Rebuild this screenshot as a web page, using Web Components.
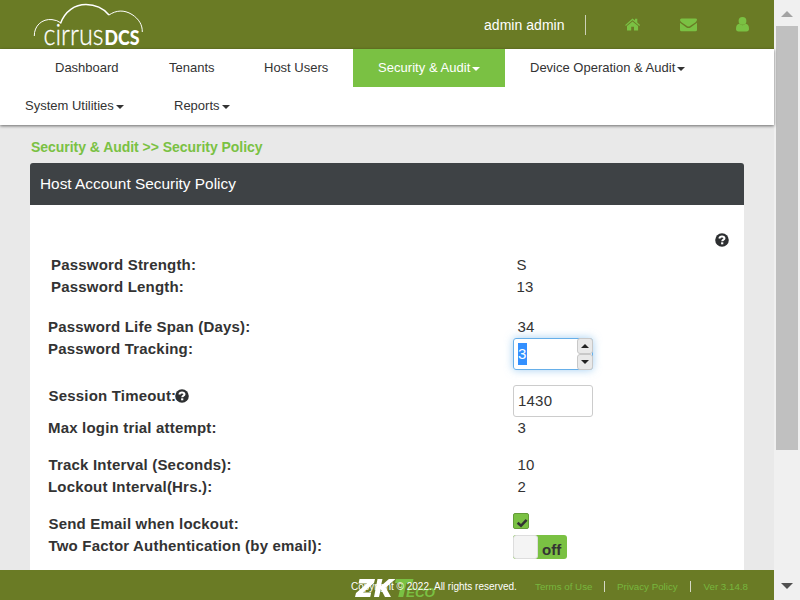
<!DOCTYPE html>
<html lang="en">
<head>
<meta charset="utf-8">
<title>Host Account Security Policy</title>
<style>
html,body{margin:0;height:100%;overflow:hidden;font-family:"Liberation Sans",Arial,sans-serif;color:#333}
</style>
</head>
<body>
<policy-page></policy-page>
<script>
function define(name, html){
  const t=document.createElement('template'); t.innerHTML=html;
  customElements.define(name, class extends HTMLElement{
    constructor(){super();this.attachShadow({mode:'open'}).appendChild(t.content.cloneNode(true));}
  });
}

define('cirrus-logo', `<style>:host{display:block;width:116px;height:49px}svg{display:block;overflow:visible}</style>
<svg width="116" height="49" viewBox="30 0 116 49" fill="none" stroke="#fff">
<path d="M34.3 36C34 26 42 18.5 52 19.6Q57 20 61 23" stroke-width="1"/>
<path d="M60.5 23.5C65 11 75 4.6 86 4.6C95 4.6 103 8 109 15" stroke-width="1.5"/>
<path d="M109 15C116 10.200 124 9.500 132 14.500C139 19 142.500 25 142.300 32" stroke-width="1"/>
<g fill="#fff" stroke="none"><text x="43.500" y="44.800" font-family="Lato" font-weight="300" font-size="28.500" textLength="60" lengthAdjust="spacingAndGlyphs" stroke="#fff" stroke-width=".3">cirrus</text>
<text x="104.500" y="44.800" font-family="Lato" font-weight="900" font-size="20" textLength="35" lengthAdjust="spacingAndGlyphs">DCS</text></g>
</svg>`);

define('top-bar', `<style>
:host{display:flex;height:49px;background:#6a7b25;align-items:flex-start}
cirrus-logo{margin-left:30px}
.user{margin-left:auto;color:#fff;font-size:14px;line-height:16px;letter-spacing:.04px;padding:17px 0 0;width:101px;white-space:nowrap}
.sep{width:1px;height:20px;background:#cdd1b8;margin-top:15px}
.icons{display:flex;width:188px;height:49px}
svg{fill:#7ac143;display:block}
</style><cirrus-logo></cirrus-logo><span class="user">admin admin</span><i class="sep"></i>
<div class="icons"><svg width="188" height="49" viewBox="586 0 188 49">
<path d="M625.200 24.900 632.500 18.500l2.500 2.100v-1.900h2.300v3.900l2.800 2.300-.8 1-6.800-5.700-6.700 5.700zM627 26l5.500-4.600 5.600 4.600v4.500h-4.100v-3.800h-2.800v3.800H627z"/>
<path d="M680 20q0-1.500 1.500-1.500h14q1.500 0 1.500 1.300 0 1.300-1.700 2.600l-5.300 3.700q-1.500 1-3 0l-5.200-3.700Q680 21.200 680 20zM680 22.800l6.500 4.600q2 1.400 4 0l6.500-4.600v7q0 1.500-1.500 1.500h-14q-1.500 0-1.500-1.500z"/>
<circle cx="742.500" cy="20.900" r="3.900"/><path d="M739.300 23.800Q742.500 26.500 745.700 23.800 749 24 749 29q0 2.400-2.600 2.400h-7.800Q736 31.400 736 29 736 24 739.300 23.800z"/>
</svg></div>`);

define('nav-item', `<style>
:host{display:flex;align-items:center;box-sizing:border-box;height:38px;padding:0 0 1px 25px;font-size:13px;line-height:18px;white-space:nowrap}
:host([active]){background:#7ac143;color:#fff}
i{display:none;border:4px solid transparent;border-top-color:currentColor;border-bottom:0;margin:3px 0 0 2px}
:host([menu]) i{display:block}
</style><slot></slot><i></i>`);

define('nav-bar', `<style>
:host{display:block;height:76px;background:#fff;box-shadow:0 1px 3px rgba(0,0,0,.55);position:relative}
div{display:flex}.one{padding-left:30px}
</style><div class="one"><nav-item style="width:114px">Dashboard</nav-item><nav-item style="width:95px">Tenants</nav-item><nav-item style="width:114px">Host Users</nav-item><nav-item active menu style="width:152px;letter-spacing:.04px">Security &amp; Audit</nav-item><nav-item menu style="width:205px">Device Operation &amp; Audit</nav-item></div>
<div><nav-item menu style="width:149px">System Utilities</nav-item><nav-item menu>Reports</nav-item></div>`);

define('help-icon', `<style>:host{display:block;width:14px;height:14px}svg{display:block}</style>
<svg width="14" height="14" viewBox="0 0 14 14"><circle cx="7" cy="7" r="6.800" fill="#2d2f31"/><path d="M4.300 5.500Q4.700 3.400 7 3.400T9.500 5.300C9.500 6.700 7.300 6.600 7.200 8.300" fill="none" stroke="#fff" stroke-width="2"/><path d="M6.100 9.300h2.200v2H6.100z" fill="#fff"/></svg>`);

define('number-field', `<style>
:host{display:flex;position:relative;box-sizing:border-box;width:80px;height:32px;border:1px solid #ccc;border-radius:3px;align-items:center;padding-left:4px;letter-spacing:.2px}
:host([focused]){border-color:#66afe9;box-shadow:0 0 8px rgba(102,175,233,.6)}
:host([focused]) span{background:#3390ff;color:#fff;line-height:22px;height:22px}
.spin{display:none;margin-left:auto;margin-right:-1px;width:16px;height:32px;flex-direction:column}
:host([focused]) .spin{display:flex}
b{box-sizing:border-box;flex:1;border:1px solid #c8c8c8;border-radius:3px;background:#e9e9e9;display:flex;align-items:center;justify-content:center}
b:before{content:"";border:4px solid transparent;border-bottom-color:#222;border-top:0;margin-bottom:1px}
b+b:before{transform:rotate(180deg)}
</style><span><slot></slot></span><div class="spin"><b></b><b></b></div>`);

define('check-box', `<style>:host{display:block;box-sizing:border-box;width:16px;height:16px;background:#7ac143;border:1px solid #649c38;border-radius:2px}svg{display:block}</style>
<svg width="14" height="14" viewBox="0 0 14 14"><path d="M3.600 8.800 7 11.800 12.600 5.900" fill="none" stroke="#333" stroke-width="2.600"/></svg>`);

define('toggle-switch', `<style>:host{display:flex;box-sizing:border-box;width:54px;height:24px;border-radius:3px;background:#7ac143;overflow:hidden;font-weight:bold;font-size:15px;line-height:30px}
i{box-sizing:border-box;width:25px;height:24px;background:#f4f4f4;border:1px solid #ddd;border-radius:3px;margin-right:4px}</style><i></i><slot></slot>`);

define('policy-row', `<style>
:host{display:grid;grid-template-columns:465px 1fr;height:22px;line-height:22px;padding-left:18px;font-size:15px}
:host([tall]){height:32px}
.l{font-weight:bold;letter-spacing:.19px;display:flex;white-space:nowrap;height:22px}
</style><div class="l"><slot name="label"></slot></div><div><slot></slot></div>`);

define('policy-panel', `<style>
:host{display:block;width:714px}
header{height:42px;background:#3e4245;color:#fff;border-radius:3px 3px 0 0;font-size:15.400px;line-height:42px;padding-left:10px}
main{height:365px;background:#fff;overflow:hidden}
.help{display:flex;justify-content:flex-end;height:20px;padding:28px 15px 1px 0}
.gap{margin-top:15px}.pad{padding-left:21px;grid-template-columns:462px 1fr}
.t{padding-left:4.500px;letter-spacing:.2px}
.q{margin:4px 0 0 -1px}
.s{padding-left:.5px}
</style><header>Host Account Security Policy</header><main><div class="help"><help-icon></help-icon></div>
<policy-row class="pad"><span slot="label">Password Strength:</span><div class="t" style="padding-left:3.500px">S</div></policy-row>
<policy-row class="pad"><span slot="label">Password Length:</span><div class="t" style="padding-left:3.500px">13</div></policy-row>
<policy-row style="margin-top:18px"><span slot="label">Password Life Span (Days):</span><div class="t">34</div></policy-row>
<policy-row tall><span slot="label">Password Tracking:</span><number-field focused>3</number-field></policy-row>
<policy-row tall class="gap"><span slot="label" class="s">Session Timeout:</span><help-icon slot="label" class="q"></help-icon><number-field>1430</number-field></policy-row>
<policy-row><span slot="label">Max login trial attempt:</span><div class="t">3</div></policy-row>
<policy-row class="gap"><span slot="label" class="s">Track Interval (Seconds):</span><div class="t">10</div></policy-row>
<policy-row><span slot="label">Lockout Interval(Hrs.):</span><div class="t">2</div></policy-row>
<policy-row class="gap"><span slot="label" class="s">Send Email when lockout:</span><check-box></check-box></policy-row>
<policy-row><span slot="label" class="s">Two Factor Authentication (by email):</span><toggle-switch>off</toggle-switch></policy-row>
</main>`);

define('page-footer', `<style>
:host{display:flex;height:30px;background:#6a7b25;position:relative;z-index:0;font-size:9.750px;line-height:12px;color:#7ac143}
.c{color:#fff;margin-left:351px;width:184px;font-size:10px}
span{padding-top:11px;white-space:nowrap;box-sizing:border-box}
i{width:1px;height:11px;background:#d5d8c5;margin-top:11px}
a{opacity:.85}
svg{position:absolute;left:350px;top:0}
.under{z-index:-1}
</style><svg class="under" width="90" height="30" viewBox="350 570 90 30" fill="#7ac143">
<path d="M396 579h17.500l-1 4h-6l-3.300 14h-5l3.300-14H395z"/>
<text x="406" y="597" font-family="Liberation Sans" font-size="13" font-weight="bold" font-style="italic" textLength="29" lengthAdjust="spacingAndGlyphs">ECO</text></svg>
<span class="c">Copyright © 2022. All rights reserved.</span><span style="width:69px"><a>Terms of Use</a></span><i></i><span style="width:85px;padding-left:12px"><a>Privacy Policy</a></span><i></i><span style="padding-left:12.500px"><a>Ver 3.14.8</a></span>
<svg width="90" height="30" viewBox="350 570 90 30">
<path fill="#fff" d="M359.500 579H375l-1 4-11 9.500h8.200l-1 4.500H355l1-4 11-9.500h-8.500zM377.500 579h5l-1.600 7 8-7h6.600l-9.800 8.400L391 597h-6l-4.200-8-1.800 8h-5z"/></svg>`);

define('scroll-track', `<style>:host{display:flex;flex-direction:column;width:26px;height:600px;background:#f0f0f0;align-items:center}
i{border:6px solid transparent;border-top:0;border-bottom-color:#a3a3a3;margin:11px 0 9px}
b{width:22px;height:424px;background:#c0c0c0}
i.d{border-bottom-color:#505050;transform:rotate(180deg);margin:auto 0 11px}
</style><i></i><b></b><i class="d"></i>`);

define('policy-page', `<style>
:host{display:flex;width:800px;height:600px}
.app{width:774px;display:flex;flex-direction:column;background:#e9e9e9}
.crumb{height:38px;box-sizing:border-box;padding:13px 0 0 31px;font-size:14px;letter-spacing:-.04px;line-height:18px;font-weight:bold;color:#7ac143;white-space:nowrap}
policy-panel{margin-left:30px}
</style><div class="app"><top-bar></top-bar><nav-bar></nav-bar><div class="crumb">Security &amp; Audit &gt;&gt; Security Policy</div><policy-panel></policy-panel><page-footer></page-footer></div><scroll-track></scroll-track>`);
</script>
</body>
</html>
